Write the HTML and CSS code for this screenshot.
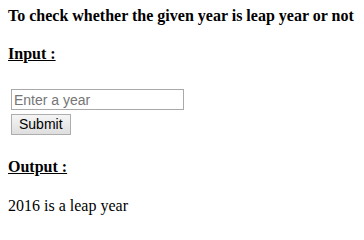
FILE: index.html
```html
<!DOCTYPE html>
<html>
<head>
<meta charset="utf-8">
<link rel="stylesheet" href="styles.css">
</head>
<body>
<div class="page">
  <div class="title">To check whether the given year is leap year or not</div>
  <div class="label">Input :</div>
  <form class="form">
    <input class="year" type="text" placeholder="Enter a year">
    <button class="submit" type="button">Submit</button>
  </form>
  <div class="label out">Output :</div>
  <div class="result">2016 is a leap year</div>
</div>
</body>
</html>
```

FILE: styles.css
```css
html, body {
  margin: 0;
  padding: 0;
  background: #ffffff;
}
.page {
  padding: 7px 8px 0 8px;
  font-family: "Liberation Serif", "Times New Roman", serif;
  font-size: 16px;
  line-height: 18px;
  color: #000000;
}
.title {
  font-weight: bold;
}
.label {
  font-weight: bold;
  text-decoration: underline;
  margin-top: 20px;
}
.form {
  display: flex;
  flex-direction: column;
  align-items: flex-start;
  gap: 4px;
  margin: 26px 0 0 3px;
}
.year {
  box-sizing: border-box;
  width: 173px;
  height: 21px;
  margin: 0;
  padding: 0 2px;
  border: 1px solid #a9a9a9;
  font-family: "Liberation Sans", Arial, sans-serif;
  font-size: 14px;
  color: #000;
  background: #fff;
  outline: none;
}
.year::placeholder {
  color: #757575;
}
.submit {
  box-sizing: border-box;
  height: 21px;
  margin: 0;
  padding: 0 7px;
  border: 1px solid #adadad;
  border-radius: 0;
  background: linear-gradient(#f5f5f5, #dedede);
  font-family: "Liberation Sans", Arial, sans-serif;
  font-size: 14px;
  color: #000;
  line-height: 17px;
}
.out {
  margin-top: 23px;
}
.result {
  margin-top: 21px;
}
```
